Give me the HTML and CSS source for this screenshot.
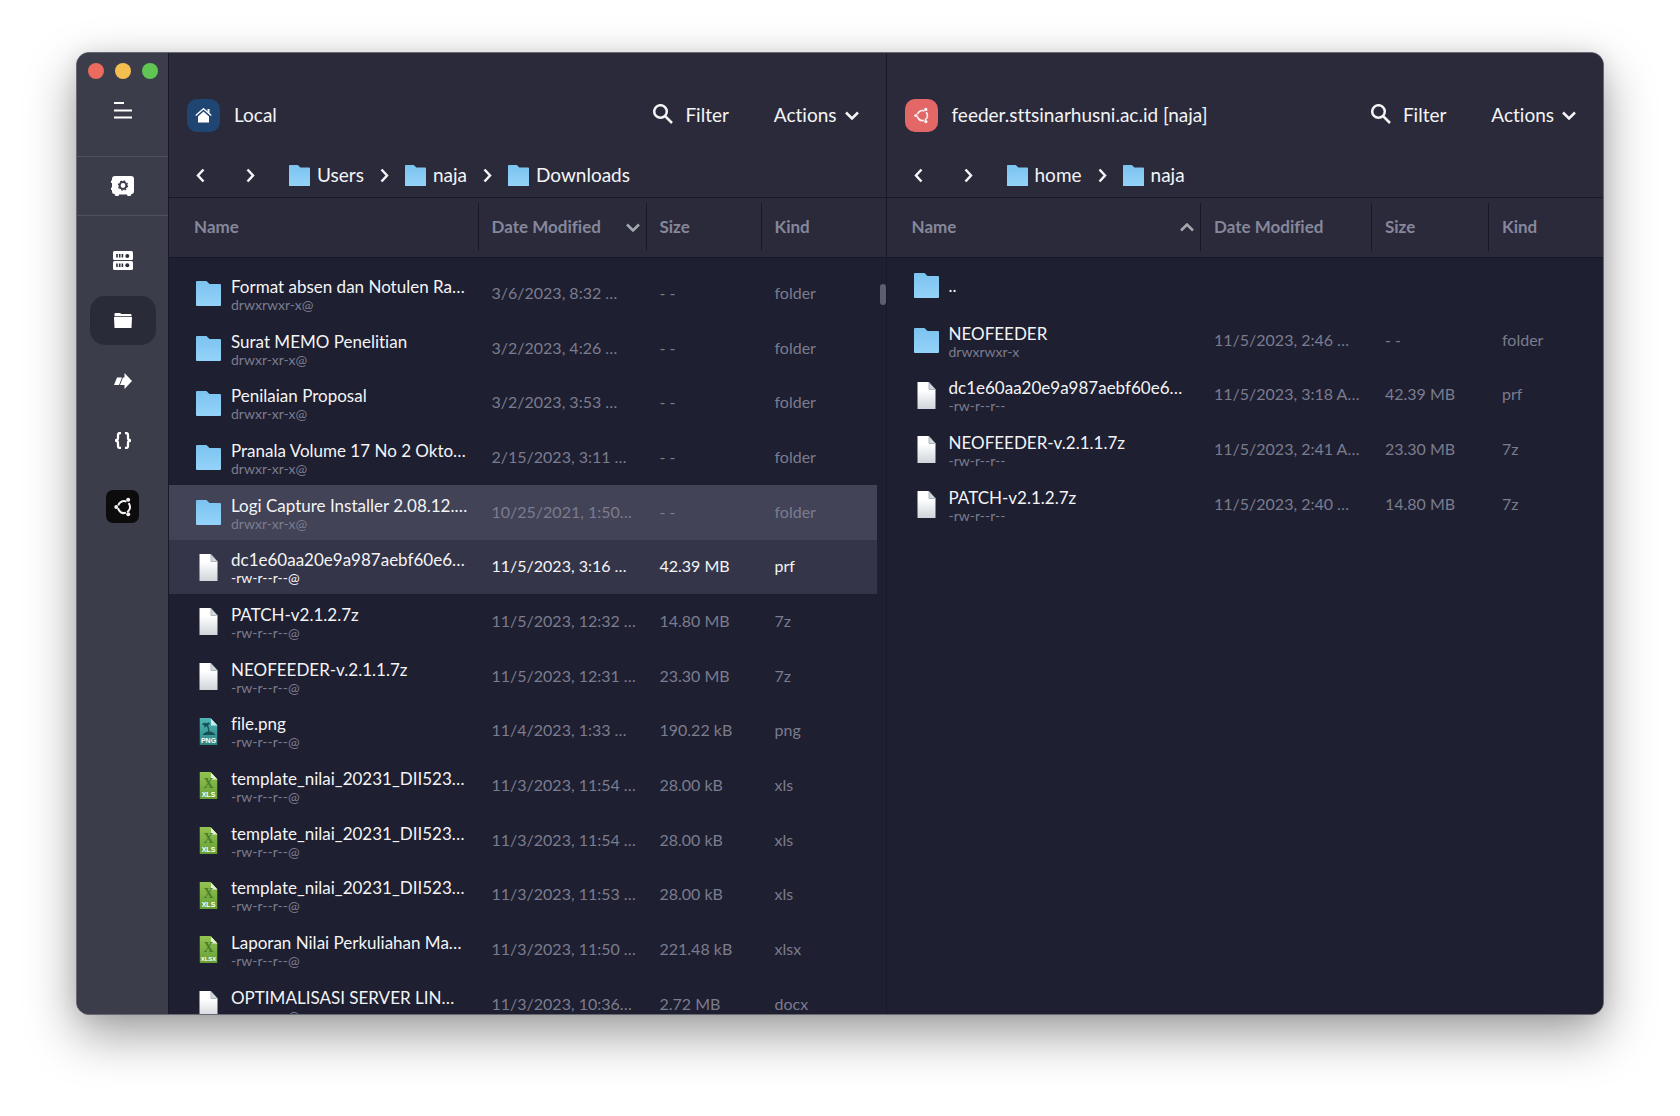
FILE: index.html
```html
<!DOCTYPE html>
<html lang="en">
<head>
<meta charset="utf-8">
<title>SFTP</title>
<link rel="stylesheet" href="styles.css">
</head>
<body>
<svg class="sprite" aria-hidden="true">
  <defs>
    <linearGradient id="blue" x1="0" y1="0" x2="0" y2="1"><stop offset="0" stop-color="#7bc3f0"/><stop offset="1" stop-color="#94d3f9"/></linearGradient>
    <linearGradient id="paper" x1="0" y1="0" x2="0" y2="1"><stop offset=".3" stop-color="#ffffff"/><stop offset="1" stop-color="#cfd5da"/></linearGradient>
    <linearGradient id="teal" x1="0" y1="0" x2="0" y2="1"><stop offset="0" stop-color="#4fb5b5"/><stop offset="1" stop-color="#2c8583"/></linearGradient>
    <linearGradient id="green" x1="0" y1="0" x2="0" y2="1"><stop offset="0" stop-color="#93c352"/><stop offset="1" stop-color="#659f35"/></linearGradient>
  </defs>
  <symbol id="folder" viewBox="0 0 25 25"><path d="M1 0H10.500L13.500 3H24Q25 3 25 4V24Q25 25 24 25H1Q0 25 0 24V1Q0 0 1 0Z" fill="url(#blue)"/></symbol>
  <symbol id="file" viewBox="0 0 18 27"><path d="M0 0H11L18 7.500V27H0Z" fill="url(#paper)"/><path d="M11.500 .5V7.500H18Z" fill="#d3dade" stroke="#9aa9b0" stroke-width=".8"/></symbol>
  <symbol id="image" viewBox="0 0 18 27"><path d="M0 0H11L18 7.500V27H0Z" fill="url(#teal)"/><path d="M11.500 .5V7.500H18Z" fill="#c9eded"/><path d="M2.500 6.500C4 4.500 6 4.500 7 5.500C8 4 10 4 10.500 6L8.500 7C9.500 9 9.800 11.500 10 13.500C12.500 13.700 15 15 16 17H3C4.500 15 6.500 13.700 8.800 13.500C8.500 11 8 9 7 8L5 10L4.800 7.500Z" fill="#174f52"/></symbol>
  <symbol id="sheet" viewBox="0 0 18 27"><path d="M0 0H11L18 7.500V27H0Z" fill="url(#green)"/><path d="M11.500 .5V7.500H18Z" fill="#e4f2d2"/></symbol>
  <symbol id="left" viewBox="0 0 9 15"><path d="M7.500 1.500L2 7.500L7.500 13.500" class="stroke"/></symbol>
  <symbol id="right" viewBox="0 0 9 15"><path d="M1.500 1.500L7 7.500L1.500 13.500" class="stroke"/></symbol>
  <symbol id="down" viewBox="0 0 14 9"><path d="M1 1.500L7 7.500L13 1.500" class="stroke"/></symbol>
  <symbol id="up" viewBox="0 0 14 9"><path d="M1 7.500L7 1.500L13 7.500" class="stroke"/></symbol>
  <symbol id="search" viewBox="0 0 20 20"><circle cx="7.500" cy="7.500" r="6.300" class="stroke"/><path d="M12 12L19 19" class="stroke"/></symbol>
  <symbol id="ubuntu" viewBox="0 0 18 20"><circle cx="10" cy="10" r="6" fill="none" stroke="currentColor" stroke-width="2" stroke-dasharray="10.170 2.400" stroke-dashoffset="-1.200" transform="rotate(60 10 10)"/><circle cx="2.200" cy="10" r="1.900" fill="currentColor"/><circle cx="14.200" cy="2.700" r="2" fill="currentColor"/><circle cx="14.200" cy="17.300" r="2" fill="currentColor"/></symbol>
</svg>
<div class="window">
  <nav class="sidebar" aria-label="Main">
    <div class="top">
      <div class="lights"><button class="red" aria-label="Close"></button><button class="yellow" aria-label="Minimize"></button><button class="green" aria-label="Zoom"></button></div>
      <button class="menu" aria-label="Menu"><svg width="18" height="17" viewBox="0 0 18 17"><path d="M0 1H10M0 8.500H18M0 15.500H18" stroke="#fff" stroke-width="2"/></svg></button>
    </div>
    <button class="vault" aria-label="Vaults"><svg width="23" height="20" viewBox="0 0 23 20"><path d="M4 0H20Q23 0 23 3V15Q23 18 20.500 18L19.500 20H16.500L16 18.500H8L7.500 20H4.500L3.500 18Q1 18 1 15.500V14H0V11.500H1V7H0V4.500H1V3Q1 0 4 0Z" fill="#fff"/><circle cx="12" cy="9.500" r="3.400" fill="none" stroke="#3c3d4a" stroke-width="2"/><circle cx="12" cy="9.500" r="4.600" fill="none" stroke="#3c3d4a" stroke-width="1.200" stroke-dasharray="1.800 1.813"/></svg></button>
    <div class="items">
      <button aria-label="Hosts"><svg width="20" height="19" viewBox="0 0 20 19"><rect width="20" height="9" rx="1.500" fill="#fff"/><rect y="10" width="20" height="9" rx="1.500" fill="#fff"/><path d="M4 3V6.500M6.700 3V6.500M9.400 3V6.500M4 12.500V16M6.700 12.500V16M9.400 12.500V16" stroke="#2c2d3a" stroke-width="1.600"/><circle cx="14.300" cy="5" r="2" fill="#2c2d3a"/><circle cx="14.300" cy="14.300" r="2" fill="#2c2d3a"/></svg></button>
      <button class="current" aria-label="SFTP"><svg width="18" height="15" viewBox="0 0 18 15"><path d="M.5 3.200V.8Q.5 0 1.500 0H6L7.500 1H16.500Q17.500 1 17.500 2V3.200Z" fill="#fff"/><path d="M0 4H18L17.500 15H.5Z" fill="#fff"/></svg></button>
      <button aria-label="Port forwarding"><svg width="18" height="16" viewBox="0 0 18 16"><path d="M3 4.500H8L5 12H0ZM9 4.500H10.500V0L18 8L10.500 16V12H6Z" fill="#fff"/></svg></button>
      <button aria-label="Snippets"><svg width="18" height="17" viewBox="0 0 18 17"><path d="M7 1H6Q4 1 4 3V6Q4 8.500 1 8.500Q4 8.500 4 11V14Q4 16 6 16H7M11 1H12Q14 1 14 3V6Q14 8.500 17 8.500Q14 8.500 14 11V14Q14 16 12 16H11" fill="none" stroke="#fff" stroke-width="2.300"/></svg></button>
    </div>
    <button class="host" aria-label="Ubuntu host"><svg width="18" height="20"><use href="#ubuntu"/></svg></button>
  </nav>

  <section class="pane local">
    <header>
      <div class="title">
        <span class="badge home"><svg width="17" height="15" viewBox="0 0 17 15"><path d="M3 8.500L8.500 3.500L14 8.500V14.500H3Z" fill="#fff"/><path d="M.7 7.500L8.500 .8L16.300 7.500" fill="none" stroke="#fff" stroke-width="1.400"/><path d="M12.500 1H14.500V6L12.500 4Z" fill="#fff"/></svg></span>
        <h2>Local</h2>
        <button class="filter"><svg width="20" height="20"><use href="#search"/></svg>Filter</button>
        <button class="actions">Actions<svg width="14" height="9"><use href="#down"/></svg></button>
      </div>
      <nav class="path" aria-label="Local path">
        <button aria-label="Back"><svg width="9" height="15"><use href="#left"/></svg></button>
        <button aria-label="Forward"><svg width="9" height="15"><use href="#right"/></svg></button>
        <a href="#"><svg width="21" height="21"><use href="#folder"/></svg>Users</a>
        <svg width="9" height="15"><use href="#right"/></svg>
        <a href="#"><svg width="21" height="21"><use href="#folder"/></svg>naja</a>
        <svg width="9" height="15"><use href="#right"/></svg>
        <a href="#"><svg width="21" height="21"><use href="#folder"/></svg>Downloads</a>
      </nav>
    </header>
    <div class="listing">
      <table>
        <colgroup><col><col class="c-date"><col class="c-size"><col class="c-kind"></colgroup>
        <thead><tr><th><button>Name</button></th><th><button>Date Modified<svg width="14" height="9"><use href="#down"/></svg></button></th><th><button>Size</button></th><th><button>Kind</button></th></tr></thead>
        <tbody>
          <tr><td><div class="file"><svg><use href="#folder"/></svg><p>Format absen dan Notulen Ra…<small>drwxrwxr-x@</small></p></div></td><td>3/6/2023, 8:32 …</td><td>- -</td><td>folder</td></tr>
          <tr><td><div class="file"><svg><use href="#folder"/></svg><p>Surat MEMO Penelitian<small>drwxr-xr-x@</small></p></div></td><td>3/2/2023, 4:26 …</td><td>- -</td><td>folder</td></tr>
          <tr><td><div class="file"><svg><use href="#folder"/></svg><p>Penilaian Proposal<small>drwxr-xr-x@</small></p></div></td><td>3/2/2023, 3:53 …</td><td>- -</td><td>folder</td></tr>
          <tr><td><div class="file"><svg><use href="#folder"/></svg><p>Pranala Volume 17 No 2 Okto…<small>drwxr-xr-x@</small></p></div></td><td>2/15/2023, 3:11 …</td><td>- -</td><td>folder</td></tr>
          <tr class="hover"><td><div class="file"><svg><use href="#folder"/></svg><p>Logi Capture Installer 2.08.12.…<small>drwxr-xr-x@</small></p></div></td><td>10/25/2021, 1:50…</td><td>- -</td><td>folder</td></tr>
          <tr class="selected"><td><div class="file"><svg><use href="#file"/></svg><p>dc1e60aa20e9a987aebf60e6…<small>-rw-r--r--@</small></p></div></td><td>11/5/2023, 3:16 …</td><td>42.39 MB</td><td>prf</td></tr>
          <tr><td><div class="file"><svg><use href="#file"/></svg><p>PATCH-v2.1.2.7z<small>-rw-r--r--@</small></p></div></td><td>11/5/2023, 12:32 …</td><td>14.80 MB</td><td>7z</td></tr>
          <tr><td><div class="file"><svg><use href="#file"/></svg><p>NEOFEEDER-v.2.1.1.7z<small>-rw-r--r--@</small></p></div></td><td>11/5/2023, 12:31 …</td><td>23.30 MB</td><td>7z</td></tr>
          <tr><td><div class="file"><svg viewBox="0 0 18 27"><use href="#image" width="18" height="27"/><text x="9" y="24.500" class="ext">PNG</text></svg><p>file.png<small>-rw-r--r--@</small></p></div></td><td>11/4/2023, 1:33 …</td><td>190.22 kB</td><td>png</td></tr>
          <tr><td><div class="file"><svg viewBox="0 0 18 27"><use href="#sheet" width="18" height="27"/><text x="9" y="16" class="mark">X</text><text x="9" y="24.500" class="ext">XLS</text></svg><p>template_nilai_20231_DII523…<small>-rw-r--r--@</small></p></div></td><td>11/3/2023, 11:54 …</td><td>28.00 kB</td><td>xls</td></tr>
          <tr><td><div class="file"><svg viewBox="0 0 18 27"><use href="#sheet" width="18" height="27"/><text x="9" y="16" class="mark">X</text><text x="9" y="24.500" class="ext">XLS</text></svg><p>template_nilai_20231_DII523…<small>-rw-r--r--@</small></p></div></td><td>11/3/2023, 11:54 …</td><td>28.00 kB</td><td>xls</td></tr>
          <tr><td><div class="file"><svg viewBox="0 0 18 27"><use href="#sheet" width="18" height="27"/><text x="9" y="16" class="mark">X</text><text x="9" y="24.500" class="ext">XLS</text></svg><p>template_nilai_20231_DII523…<small>-rw-r--r--@</small></p></div></td><td>11/3/2023, 11:53 …</td><td>28.00 kB</td><td>xls</td></tr>
          <tr><td><div class="file"><svg viewBox="0 0 18 27"><use href="#sheet" width="18" height="27"/><text x="9" y="16" class="mark">X</text><text x="9" y="24.500" class="ext small">XLSX</text></svg><p>Laporan Nilai Perkuliahan Ma…<small>-rw-r--r--@</small></p></div></td><td>11/3/2023, 11:50 …</td><td>221.48 kB</td><td>xlsx</td></tr>
          <tr><td><div class="file"><svg><use href="#file"/></svg><p>OPTIMALISASI SERVER LIN…<small>-rw-r--r--@</small></p></div></td><td>11/3/2023, 10:36…</td><td>2.72 MB</td><td>docx</td></tr>
        </tbody>
      </table>
      <div class="thumb"></div>
    </div>
  </section>

  <section class="pane remote">
    <header>
      <div class="title">
        <span class="badge linux"><svg width="15" height="17"><use href="#ubuntu"/></svg></span>
        <h2>feeder.sttsinarhusni.ac.id [naja]</h2>
        <button class="filter"><svg width="20" height="20"><use href="#search"/></svg>Filter</button>
        <button class="actions">Actions<svg width="14" height="9"><use href="#down"/></svg></button>
      </div>
      <nav class="path" aria-label="Remote path">
        <button aria-label="Back"><svg width="9" height="15"><use href="#left"/></svg></button>
        <button aria-label="Forward"><svg width="9" height="15"><use href="#right"/></svg></button>
        <a href="#"><svg width="21" height="21"><use href="#folder"/></svg>home</a>
        <svg width="9" height="15"><use href="#right"/></svg>
        <a href="#"><svg width="21" height="21"><use href="#folder"/></svg>naja</a>
      </nav>
    </header>
    <div class="listing">
      <table>
        <colgroup><col><col class="c-date"><col class="c-size"><col class="c-kind"></colgroup>
        <thead><tr><th><button>Name<svg width="14" height="9"><use href="#up"/></svg></button></th><th><button>Date Modified</button></th><th><button>Size</button></th><th><button>Kind</button></th></tr></thead>
        <tbody>
          <tr><td><div class="file parent"><svg><use href="#folder"/></svg><p>..</p></div></td><td></td><td></td><td></td></tr>
          <tr><td><div class="file"><svg><use href="#folder"/></svg><p>NEOFEEDER<small>drwxrwxr-x</small></p></div></td><td>11/5/2023, 2:46 …</td><td>- -</td><td>folder</td></tr>
          <tr><td><div class="file"><svg><use href="#file"/></svg><p>dc1e60aa20e9a987aebf60e6…<small>-rw-r--r--</small></p></div></td><td>11/5/2023, 3:18 A…</td><td>42.39 MB</td><td>prf</td></tr>
          <tr><td><div class="file"><svg><use href="#file"/></svg><p>NEOFEEDER-v.2.1.1.7z<small>-rw-r--r--</small></p></div></td><td>11/5/2023, 2:41 A…</td><td>23.30 MB</td><td>7z</td></tr>
          <tr><td><div class="file"><svg><use href="#file"/></svg><p>PATCH-v2.1.2.7z<small>-rw-r--r--</small></p></div></td><td>11/5/2023, 2:40 …</td><td>14.80 MB</td><td>7z</td></tr>
        </tbody>
      </table>
    </div>
  </section>
</div>
</body>
</html>
```
FILE: styles.css
```css
* { box-sizing: border-box; }
body {
  margin: 0;
  height: 100vh;
  padding: 52px 76px 101px;
  background: #fff;
  font: 16px/20px Lato, "Noto Sans", sans-serif;
  font-variant-ligatures: none;
  color: #f4f4f6;
}
h2, p { margin: 0; font-weight: 400; }
svg { display: block; flex: none; }
button {
  margin: 0;
  padding: 0;
  border: 0;
  background: none;
  color: inherit;
  font: inherit;
  font-variant-ligatures: none;
  display: flex;
  align-items: center;
}
a { color: inherit; text-decoration: none; }
.sprite { position: absolute; width: 0; height: 0; }
.stroke { fill: none; stroke: currentColor; stroke-width: 2.5px; }
.ext { font: 700 7px "Liberation Sans", sans-serif; fill: #fff; text-anchor: middle; }
.ext.small { font-size: 6px; }
.mark { font: 700 14px "Liberation Serif", serif; fill: #4d7c2b; text-anchor: middle; }

.window {
  display: flex;
  height: 100%;
  overflow: hidden;
  border: 1px solid #686975;
  border-radius: 13px;
  background: #1e1f30;
  box-shadow: 0 20px 50px rgba(0, 0, 0, .38), 0 0 20px rgba(0, 0, 0, .08);
}

.sidebar {
  flex: none;
  width: 92px;
  border-right: 1px solid #171828;
  background: #3c3d4a;
}
.sidebar button { justify-content: center; }
.top { height: 103px; padding-top: 10px; }
.lights { display: flex; justify-content: center; gap: 11px; }
.lights button { width: 16px; height: 16px; border-radius: 50%; }
.red { background: #ed6a5e; }
.yellow { background: #f5bf4f; }
.green { background: #61c554; }
.top .menu { width: 100%; height: 32px; margin-top: 15px; }
.sidebar .vault {
  width: 100%;
  height: 60px;
  border: 1px solid #4f5060;
  border-width: 1px 0;
}
.items { display: flex; flex-direction: column; align-items: center; gap: 11px; padding-top: 20px; }
.items button { width: 66px; height: 49px; border-radius: 15px; }
.items .current { background: #2a2b39; }
.sidebar .host { width: 33px; height: 33px; margin: 25px auto 0; border-radius: 7px; background: #0c0c0d; }

.pane { flex: 1 1 0; min-width: 0; display: flex; flex-direction: column; }
.local { border-right: 1px solid #171828; }
header { flex: none; height: 145px; padding-top: 45px; background: #2a2a3b; border-bottom: 1px solid #171828; }
.title { display: flex; align-items: center; height: 34px; padding: 0 27px 0 18px; font-size: 19px; line-height: 24px; }
.badge { display: flex; align-items: center; justify-content: center; width: 33px; height: 33px; border-radius: 10px; margin-right: 14px; }
.home { background: #1f4673; }
.linux { background: #e36767; }
.title h2 { flex: 1; font-size: inherit; }
.filter { gap: 12px; margin-right: 45px; }
.filter svg { margin-top: -2px; }
.actions { gap: 8px; }
.path { display: flex; align-items: center; height: 32px; margin-top: 27px; padding-left: 27px; font-size: 19px; line-height: 24px; gap: 16px; }
.path button + button { margin-left: 25px; margin-right: 18px; }
.path a { display: flex; align-items: center; gap: 7px; }

.listing {
  flex: 1;
  min-height: 0;
  overflow: hidden;
  position: relative;
  background: linear-gradient(#2a2a3b 59px, #171828 59px 60px, #1e1f30 60px);
}
table { width: 100%; table-layout: fixed; border-collapse: collapse; }
.local table { width: calc(100% - 9px); }
.c-date { width: 168px; }
.c-size { width: 115px; }
.c-kind { width: 116px; }
.remote .c-date { width: 171px; }
.remote .c-size { width: 117px; }
.remote .c-kind { width: 115px; }
th, td { padding: 0; text-align: left; white-space: nowrap; }
th { height: 60px; padding-bottom: 2px; color: #86879a; font-size: 17px; font-weight: 700; }
th button { width: 100%; height: 48px; padding: 0 6px 0 13px; border-left: 1px solid #171828; justify-content: space-between; }
th:first-child button { padding-left: 25px; border: 0; }
th svg { color: #a3a9ac; }
td { color: #7b7c8e; padding: 0 0 2px 14px; }
td:first-child { padding: 0 0 0 27px; color: #f4f4f6; font-size: 17px; }
tbody tr { height: 55px; }
tbody tr:nth-child(3n) { height: 54px; }
.local tbody::before { content: ""; display: block; height: 8px; }
.file { display: flex; align-items: center; gap: 10px; }
.file svg { width: 25px; height: 27px; }
.file p { padding-top: 4px; line-height: 18px; }
.file.parent p { padding-top: 0; }
small { display: block; font-size: 14px; line-height: 18px; color: #7b7c8e; }
.hover { background: #424357; }
.selected { background: #343548; }
.selected td, .selected small { color: #f4f4f6; }
.thumb { position: absolute; right: 0; top: 86px; width: 6px; height: 21px; border-radius: 3px; background: #5d5e70; }
```
